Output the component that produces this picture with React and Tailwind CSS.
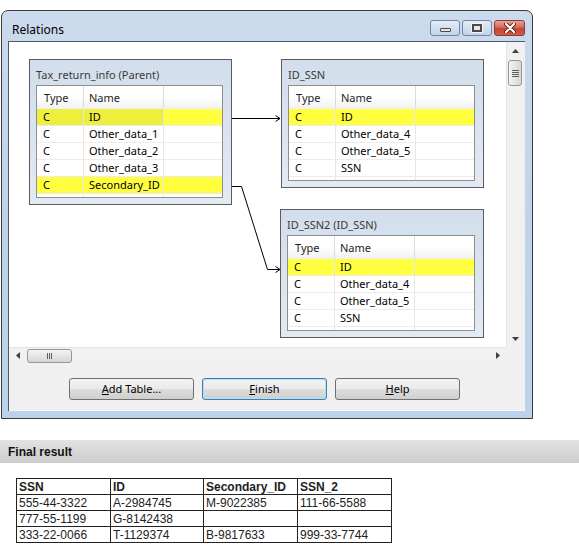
import React from 'react';

const ui = "font-['Segoe_UI','Noto_Sans',sans-serif] text-[11px]";

const parentRows = [
  { type: 'C', name: 'ID', hl: 'sel' },
  { type: 'C', name: 'Other_data_1' },
  { type: 'C', name: 'Other_data_2' },
  { type: 'C', name: 'Other_data_3' },
  { type: 'C', name: 'Secondary_ID', hl: 'on' },
];

const ssnRows = [
  { type: 'C', name: 'ID', hl: 'on' },
  { type: 'C', name: 'Other_data_4' },
  { type: 'C', name: 'Other_data_5' },
  { type: 'C', name: 'SSN' },
];

const resultRows = [
  ['555-44-3322', 'A-2984745', 'M-9022385', '111-66-5588'],
  ['777-55-1199', 'G-8142438', '', ''],
  ['333-22-0066', 'T-1129374', 'B-9817633', '999-33-7744'],
];

function ArrowUp() {
  return (
    <svg width="7" height="4" viewBox="0 0 7 4">
      <path d="M0 4 L3.5 0 L7 4 Z" fill="#404040" />
    </svg>
  );
}

function ArrowDown() {
  return (
    <svg width="7" height="4" viewBox="0 0 7 4">
      <path d="M0 0 L3.5 4 L7 0 Z" fill="#404040" />
    </svg>
  );
}

function ArrowLeft() {
  return (
    <svg width="4" height="7" viewBox="0 0 4 7">
      <path d="M4 0 L0 3.5 L4 7 Z" fill="#404040" />
    </svg>
  );
}

function ArrowRight() {
  return (
    <svg width="4" height="7" viewBox="0 0 4 7">
      <path d="M0 0 L4 3.5 L0 7 Z" fill="#404040" />
    </svg>
  );
}

function CaptionButtons() {
  return (
    <div className="ml-auto flex gap-[2px] pt-[9px]">
      <div className="flex h-[16px] w-[30px] items-end justify-center rounded-[3px] border border-[#7386a0] bg-gradient-to-b from-[#e4ecf6] to-[#c2d3e8] pb-[3px]">
        <div className="h-[4px] w-[11px] rounded-[1px] border border-[#4a4a4a] bg-[#e8e8e8]" />
      </div>
      <div className="flex h-[16px] w-[30px] items-center justify-center rounded-[3px] border border-[#7386a0] bg-gradient-to-b from-[#e4ecf6] to-[#c2d3e8]">
        <div className="h-[8px] w-[10px] border-2 border-[#4a4a4a] bg-[#e8e8e8] shadow-[0_0_0_1px_#f4f4f4]" />
      </div>
      <div className="flex h-[16px] w-[31px] items-center justify-center rounded-[3px] border border-[#8d3b30] bg-[linear-gradient(to_bottom,#e8a193_0%,#d66b5b_45%,#c44430_55%,#cf5d47_100%)]">
        <svg width="12" height="10" viewBox="0 0 12 10">
          <path d="M2 1 L10 9 M10 1 L2 9" stroke="#5a2018" strokeWidth="4" strokeLinecap="round" />
          <path d="M2 1 L10 9 M10 1 L2 9" stroke="#ffffff" strokeWidth="2.2" strokeLinecap="round" />
        </svg>
      </div>
    </div>
  );
}

function TableBox({ title, rows, className }) {
  return (
    <div className={`absolute border border-[#5c5c5c] bg-gradient-to-b from-[#d2deeb] to-[#e2eaf4] ${className}`}>
      <div className="h-[25px] truncate pl-[6px] pt-[8px] leading-[14px] text-[#3a3a3a]">{title}</div>
      <div className="ml-[6px] mr-[8px] mb-[6px] border border-[#8e8e8e] bg-white">
        <div className="flex h-[23px] bg-gradient-to-b from-white via-white to-[#eef0f3] text-[#1e1e1e]">
          <div className="w-[47px] border-r border-[#dcdcdc] pl-[7px] pt-[5px] leading-[14px]">Type</div>
          <div className="w-[80px] border-r border-[#dcdcdc] pl-[5px] pt-[5px] leading-[14px]">Name</div>
          <div className="flex-1" />
        </div>
        {rows.map((r) => (
          <div
            key={r.name}
            className={`flex h-[17px] border-b border-[#ececec] leading-[16px] text-black ${
              r.hl ? 'bg-[#ffff40]' : ''
            }`}
          >
            <div className={`w-[47px] border-r border-[#e6e6e6] pl-[6px] ${r.hl === 'sel' ? 'bg-[#eeee3c]' : ''}`}>
              {r.type}
            </div>
            <div className={`w-[80px] border-r border-[#e6e6e6] pl-[5px] ${r.hl === 'sel' ? 'bg-[#eeee3c]' : ''}`}>
              {r.name}
            </div>
            <div className="flex-1" />
          </div>
        ))}
        <div className="flex h-[3px]">
          <div className="w-[47px] border-r border-[#e6e6e6]" />
          <div className="w-[80px] border-r border-[#e6e6e6]" />
        </div>
      </div>
    </div>
  );
}

function Canvas() {
  return (
    <div className="relative h-[305px] w-[497px] overflow-hidden bg-white">
      <svg className="pointer-events-none absolute inset-0" width="497" height="305">
        <g stroke="#000" strokeWidth="1" fill="none">
          <path d="M222 76.5 H271" shapeRendering="crispEdges" />
          <path d="M266.5 73.5 L271 76.5 L266.5 79.5" />
          <path d="M222 144.5 H232.5 L258.5 227.5 H271" />
          <path d="M266.5 224.5 L271 227.5 L266.5 230.5" />
        </g>
      </svg>
      <TableBox title="Tax_return_info (Parent)" rows={parentRows} className="left-[20px] top-[17px] w-[203px]" />
      <TableBox title="ID_SSN" rows={ssnRows} className="left-[272px] top-[17px] w-[203px]" />
      <TableBox title="ID_SSN2 (ID_SSN)" rows={ssnRows} className="left-[271px] top-[167px] w-[204px]" />
    </div>
  );
}

function VScroll() {
  return (
    <div className="flex h-[305px] w-[17px] flex-col border-l border-[#e4e4e4] bg-[#f1f1f1]">
      <div className="flex h-[17px] items-center justify-center">
        <ArrowUp />
      </div>
      <div className="mx-[1px] mt-px flex h-[26px] flex-col items-center justify-center gap-[1px] rounded-[3px] border border-[#979797] bg-gradient-to-r from-[#f4f4f4] to-[#d6d6d6]">
        <div className="h-px w-[7px] bg-[#5f5f5f]" />
        <div className="h-px w-[7px] bg-[#5f5f5f]" />
        <div className="h-px w-[7px] bg-[#5f5f5f]" />
        <div className="h-px w-[7px] bg-[#5f5f5f]" />
      </div>
      <div className="flex-1" />
      <div className="flex h-[17px] items-center justify-center">
        <ArrowDown />
      </div>
    </div>
  );
}

function HScroll() {
  return (
    <div className="flex h-[16px]">
      <div className="flex w-[497px] items-center border-t border-[#e4e4e4] bg-[#f1f1f1]">
        <div className="flex h-full w-[17px] items-center justify-center">
          <ArrowLeft />
        </div>
        <div className="ml-px flex h-[14px] w-[45px] items-center justify-center gap-[1px] rounded-[3px] border border-[#979797] bg-gradient-to-b from-[#f4f4f4] to-[#d6d6d6]">
          <div className="h-[6px] w-px bg-[#5f5f5f]" />
          <div className="h-[6px] w-px bg-[#5f5f5f]" />
          <div className="h-[6px] w-px bg-[#5f5f5f]" />
        </div>
        <div className="flex-1" />
        <div className="flex h-full w-[17px] items-center justify-center">
          <ArrowRight />
        </div>
      </div>
      <div className="w-[17px] bg-[#f0f0f0]" />
    </div>
  );
}

function DlgButton({ children, primary }) {
  return (
    <div
      className={`flex h-[22px] w-[125px] items-center justify-center rounded-[3px] border bg-[linear-gradient(to_bottom,#f2f2f2_0%,#ebebeb_48%,#dddddd_52%,#cfcfcf_100%)] text-black ${
        primary ? 'border-[#3c7fb1] shadow-[inset_0_0_0_1px_#b4e0f7]' : 'border-[#707070]'
      }`}
    >
      {children}
    </div>
  );
}

function RelationsWindow() {
  return (
    <div className={`${ui} flex h-[409px] w-[532px] flex-col rounded-t-[7px] border border-[#3a3a3a] bg-gradient-to-b from-[#cbdaec] via-[#c0d3ea] to-[#bcd2ea]`}>
      <div className="flex h-[30px] pl-[10px] pr-[7px]">
        <div className="pt-[12px] text-[12px] leading-[14px] text-black">Relations</div>
        <CaptionButtons />
      </div>
      <div className="ml-[6px] mr-[7px] flex h-[370px] flex-col border-l border-t border-[#4e5a68] bg-[#f0f0f0]">
        <div className="flex">
          <Canvas />
          <VScroll />
        </div>
        <HScroll />
        <div className="flex flex-1 gap-[8px] border-b border-[#f8f8f8] pl-[60px] pt-[15px]">
          <DlgButton>
            <span className="underline">A</span>dd Table...
          </DlgButton>
          <DlgButton primary>
            <span className="underline">F</span>inish
          </DlgButton>
          <DlgButton>
            <span className="underline">H</span>elp
          </DlgButton>
        </div>
      </div>
    </div>
  );
}

function FinalResult() {
  return (
    <div className="mt-[21px] font-['Liberation_Sans',Arial,sans-serif]">
      <div className="flex h-[23px] items-center bg-gradient-to-b from-[#e2e2e2] to-[#cdcdcd] pl-[8px] text-[12px] font-bold text-[#111]">
        Final result
      </div>
      <table className="ml-[16px] mt-[15px] w-[375px] table-fixed border-collapse text-[12px] text-[#222]">
        <thead>
          <tr className="h-[16px] font-bold">
            <td className="w-[94px] border border-[#222] px-[2px] leading-[14px]">SSN</td>
            <td className="w-[93px] border border-[#222] px-[2px] leading-[14px]">ID</td>
            <td className="w-[94px] border border-[#222] px-[2px] leading-[14px]">Secondary_ID</td>
            <td className="w-[94px] border border-[#222] px-[2px] leading-[14px]">SSN_2</td>
          </tr>
        </thead>
        <tbody>
          {resultRows.map((row) => (
            <tr key={row[0]} className="h-[16px]">
              {row.map((c, i) => (
                <td key={i} className="border border-[#222] px-[2px] leading-[14px]">
                  {c}
                </td>
              ))}
            </tr>
          ))}
        </tbody>
      </table>
    </div>
  );
}

export default function App() {
  return (
    <div className="h-[552px] w-[579px] overflow-hidden bg-white">
      <div className="pl-[1px] pt-[10px]">
        <RelationsWindow />
      </div>
      <FinalResult />
    </div>
  );
}
